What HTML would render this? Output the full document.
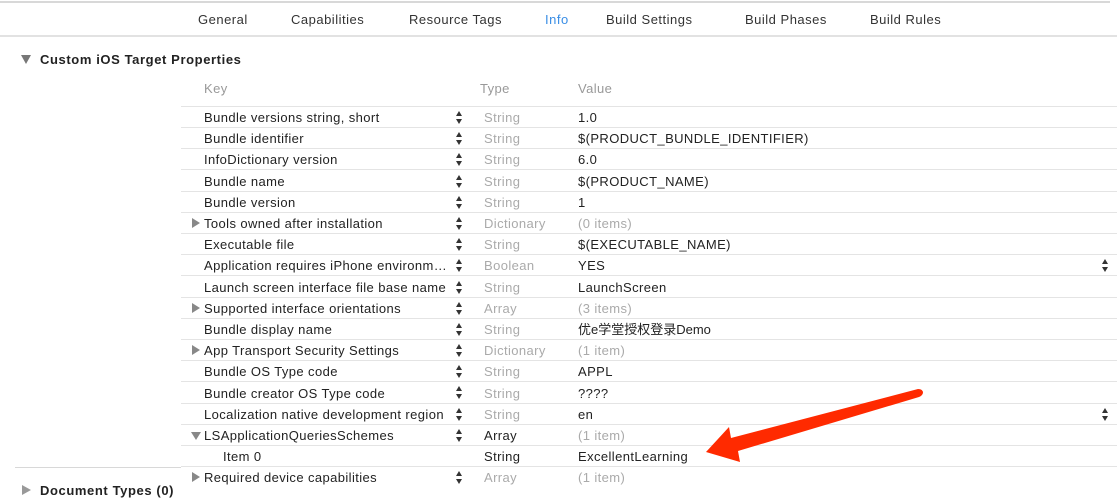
<!DOCTYPE html>
<html><head><meta charset="utf-8"><style>
body{margin:0;width:1117px;height:502px;background:#fff;overflow:hidden;position:relative;font-family:"Liberation Sans","Noto Sans CJK SC",sans-serif;font-size:13px;letter-spacing:0.4px;color:#222}
.a{position:absolute;white-space:nowrap;line-height:15px}
.tab{top:12px;font-size:13px;letter-spacing:0.5px;color:#333}
.g{color:#aaa}
.line{position:absolute;height:1px;background:#e4e4e4}
.st{position:absolute;width:7px;height:14px}
</style></head><body>
<div class="line" style="left:0;top:1px;width:1110px;height:2px;background:#d8d8d8"></div>
<div class="line" style="left:0;top:35px;width:1117px;height:2px;background:#e2e2e2"></div>
<div class="a tab" style="left:198px">General</div>
<div class="a tab" style="left:291px">Capabilities</div>
<div class="a tab" style="left:409px">Resource Tags</div>
<div class="a tab" style="left:545px;color:#3a8ee6">Info</div>
<div class="a tab" style="left:606px">Build Settings</div>
<div class="a tab" style="left:745px">Build Phases</div>
<div class="a tab" style="left:870px">Build Rules</div>

<svg class="a" style="left:21px;top:55px" width="10" height="9"><path d="M0 0H10L5 9Z" fill="#777"/></svg>
<div class="a" style="left:40px;top:52px;font-weight:bold;letter-spacing:0.6px">Custom iOS Target Properties</div>
<div class="a g" style="left:204px;top:81px;color:#999">Key</div>
<div class="a g" style="left:480px;top:81px;color:#999">Type</div>
<div class="a g" style="left:578px;top:81px;color:#999">Value</div>

<div class="line" style="left:181px;top:106px;width:936px"></div>

<div style="position:absolute;left:0;top:106px;width:1117px">
<div class="a" style="left:204px;top:4px">Bundle versions string, short</div><div class="a g" style="left:484px;top:4px">String</div><div class="a" style="left:578px;top:4px">1.0</div>
<div class="a" style="left:204px;top:25px">Bundle identifier</div><div class="a g" style="left:484px;top:25px">String</div><div class="a" style="left:578px;top:25px">$(PRODUCT_BUNDLE_IDENTIFIER)</div>
<div class="a" style="left:204px;top:46px">InfoDictionary version</div><div class="a g" style="left:484px;top:46px">String</div><div class="a" style="left:578px;top:46px">6.0</div>
<div class="a" style="left:204px;top:68px">Bundle name</div><div class="a g" style="left:484px;top:68px">String</div><div class="a" style="left:578px;top:68px">$(PRODUCT_NAME)</div>
<div class="a" style="left:204px;top:89px">Bundle version</div><div class="a g" style="left:484px;top:89px">String</div><div class="a" style="left:578px;top:89px">1</div>
<div class="a" style="left:204px;top:110px">Tools owned after installation</div><div class="a g" style="left:484px;top:110px">Dictionary</div><div class="a g" style="left:578px;top:110px">(0 items)</div>
<div class="a" style="left:204px;top:131px">Executable file</div><div class="a g" style="left:484px;top:131px">String</div><div class="a" style="left:578px;top:131px">$(EXECUTABLE_NAME)</div>
<div class="a" style="left:204px;top:152px">Application requires iPhone environm…</div><div class="a g" style="left:484px;top:152px">Boolean</div><div class="a" style="left:578px;top:152px">YES</div>
<div class="a" style="left:204px;top:174px">Launch screen interface file base name</div><div class="a g" style="left:484px;top:174px">String</div><div class="a" style="left:578px;top:174px">LaunchScreen</div>
<div class="a" style="left:204px;top:195px">Supported interface orientations</div><div class="a g" style="left:484px;top:195px">Array</div><div class="a g" style="left:578px;top:195px">(3 items)</div>
<div class="a" style="left:204px;top:216px">Bundle display name</div><div class="a g" style="left:484px;top:216px">String</div><div class="a" style="left:578px;top:216px;letter-spacing:0">优e学堂授权登录Demo</div>
<div class="a" style="left:204px;top:237px">App Transport Security Settings</div><div class="a g" style="left:484px;top:237px">Dictionary</div><div class="a g" style="left:578px;top:237px">(1 item)</div>
<div class="a" style="left:204px;top:258px">Bundle OS Type code</div><div class="a g" style="left:484px;top:258px">String</div><div class="a" style="left:578px;top:258px">APPL</div>
<div class="a" style="left:204px;top:280px">Bundle creator OS Type code</div><div class="a g" style="left:484px;top:280px">String</div><div class="a" style="left:578px;top:280px">????</div>
<div class="a" style="left:204px;top:301px">Localization native development region</div><div class="a g" style="left:484px;top:301px">String</div><div class="a" style="left:578px;top:301px">en</div>
<div class="a" style="left:204px;top:322px">LSApplicationQueriesSchemes</div><div class="a" style="left:484px;top:322px">Array</div><div class="a g" style="left:578px;top:322px">(1 item)</div>
<div class="a" style="left:223px;top:343px">Item 0</div><div class="a" style="left:484px;top:343px">String</div><div class="a" style="left:578px;top:343px">ExcellentLearning</div>
<div class="a" style="left:204px;top:364px">Required device capabilities</div><div class="a g" style="left:484px;top:364px">Array</div><div class="a g" style="left:578px;top:364px">(1 item)</div>
</div>

<div class="line" style="left:181px;top:127px;width:936px"></div>
<div class="line" style="left:181px;top:148px;width:936px"></div>
<div class="line" style="left:181px;top:169px;width:936px"></div>
<div class="line" style="left:181px;top:191px;width:936px"></div>
<div class="line" style="left:181px;top:212px;width:936px"></div>
<div class="line" style="left:181px;top:233px;width:936px"></div>
<div class="line" style="left:181px;top:254px;width:936px"></div>
<div class="line" style="left:181px;top:275px;width:936px"></div>
<div class="line" style="left:181px;top:297px;width:936px"></div>
<div class="line" style="left:181px;top:318px;width:936px"></div>
<div class="line" style="left:181px;top:339px;width:936px"></div>
<div class="line" style="left:181px;top:360px;width:936px"></div>
<div class="line" style="left:181px;top:381px;width:936px"></div>
<div class="line" style="left:181px;top:403px;width:936px"></div>
<div class="line" style="left:181px;top:424px;width:936px"></div>
<div class="line" style="left:181px;top:445px;width:936px"></div>
<div class="line" style="left:181px;top:466px;width:936px"></div>
<div class="line" style="left:15px;top:467px;width:166px;background:#d8d8d8"></div>

<svg class="a" style="left:192px;top:218px" width="8" height="10"><path d="M0 0L8 5L0 10Z" fill="#888"/></svg>
<svg class="a" style="left:192px;top:303px" width="8" height="10"><path d="M0 0L8 5L0 10Z" fill="#888"/></svg>
<svg class="a" style="left:192px;top:345px" width="8" height="10"><path d="M0 0L8 5L0 10Z" fill="#888"/></svg>
<svg class="a" style="left:191px;top:432px" width="10" height="8"><path d="M0 0H10L5 8Z" fill="#888"/></svg>
<svg class="a" style="left:192px;top:472px" width="8" height="10"><path d="M0 0L8 5L0 10Z" fill="#888"/></svg>
<svg class="a" style="left:22px;top:485px" width="9" height="10"><path d="M0 0L9 5L0 10Z" fill="#999"/></svg>
<div class="a" style="left:40px;top:483px;font-weight:bold;letter-spacing:0.6px">Document Types (0)</div>

<svg width="0" height="0" style="position:absolute"><defs><g id="s"><path d="M0 5L3 0L6 5Z M0 8L6 8L3 13Z" fill="#333"/></g></defs></svg>
<svg class="st" style="left:456px;top:111px"><use href="#s"/></svg>
<svg class="st" style="left:456px;top:132px"><use href="#s"/></svg>
<svg class="st" style="left:456px;top:153px"><use href="#s"/></svg>
<svg class="st" style="left:456px;top:175px"><use href="#s"/></svg>
<svg class="st" style="left:456px;top:196px"><use href="#s"/></svg>
<svg class="st" style="left:456px;top:217px"><use href="#s"/></svg>
<svg class="st" style="left:456px;top:238px"><use href="#s"/></svg>
<svg class="st" style="left:456px;top:259px"><use href="#s"/></svg>
<svg class="st" style="left:456px;top:281px"><use href="#s"/></svg>
<svg class="st" style="left:456px;top:302px"><use href="#s"/></svg>
<svg class="st" style="left:456px;top:323px"><use href="#s"/></svg>
<svg class="st" style="left:456px;top:344px"><use href="#s"/></svg>
<svg class="st" style="left:456px;top:365px"><use href="#s"/></svg>
<svg class="st" style="left:456px;top:386px"><use href="#s"/></svg>
<svg class="st" style="left:456px;top:408px"><use href="#s"/></svg>
<svg class="st" style="left:456px;top:429px"><use href="#s"/></svg>
<svg class="st" style="left:456px;top:471px"><use href="#s"/></svg>
<svg class="st" style="left:1102px;top:259px"><use href="#s"/></svg>
<svg class="st" style="left:1102px;top:408px"><use href="#s"/></svg>

<svg class="a" style="left:0;top:0" width="1117" height="502"><path d="M706 452L729 427L731 438L918 389Q923 389 923 393Q922 396 919 397L738 451L740 462Z" fill="#ff2a00"/></svg>
</body></html>
